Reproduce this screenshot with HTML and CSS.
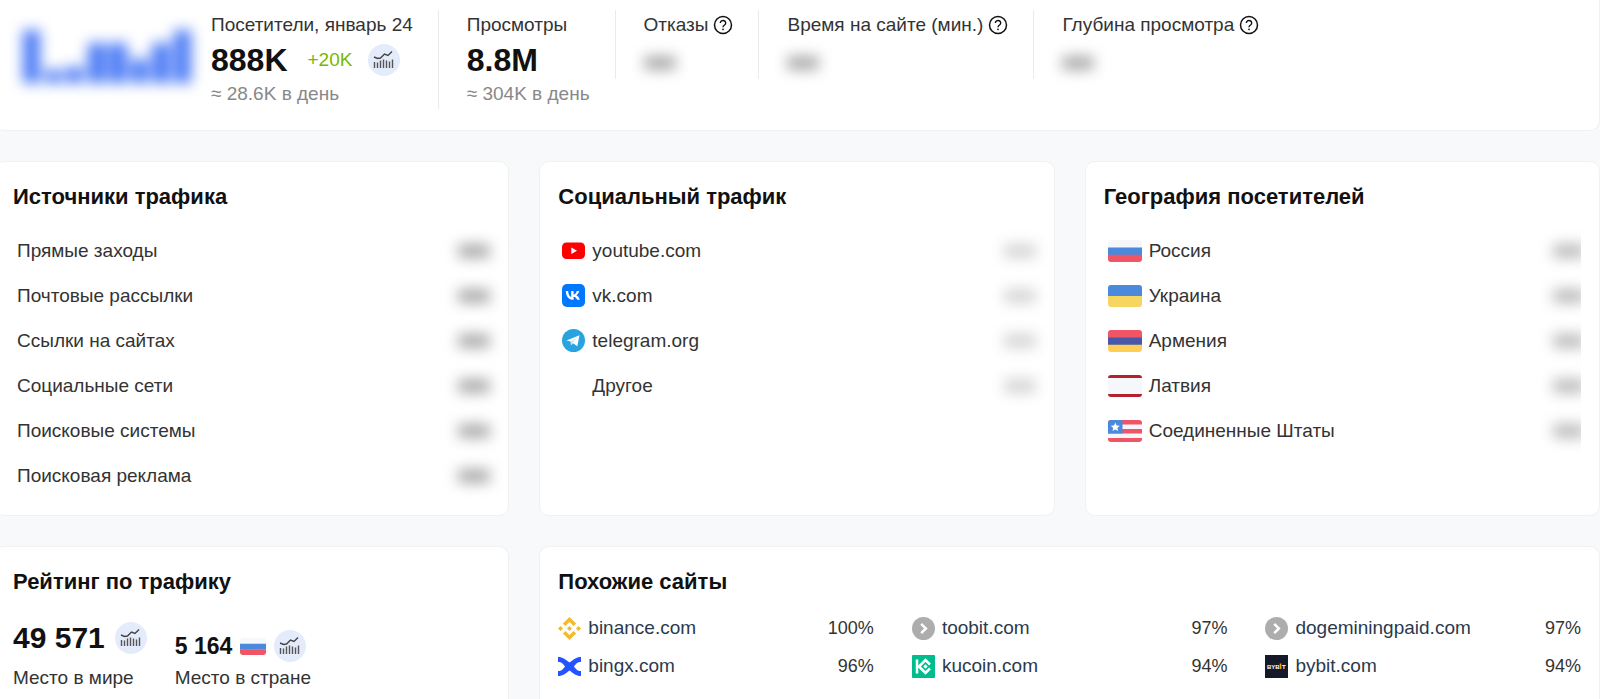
FILE: index.html
```html
<!DOCTYPE html>
<html lang="ru">
<head>
<meta charset="utf-8">
<title>Статистика сайта</title>
<meta name="viewport" content="width=device-width, initial-scale=1">
<link rel="stylesheet" href="styles.css">
</head>
<body>
<svg class="defs" aria-hidden="true">
  <symbol id="i-chart" viewBox="0 0 32 32">
    <path d="M6 13l3.500 1.500 3-.5 4-4 3.500 1.500 4-4" fill="none" stroke="#444" stroke-width="1.400"/>
    <path d="M6.500 18v6M9.500 18.500v5.500M12.500 16.500v7.500M15.500 15.500v8.500M18.500 16.500v7.500M21.500 17.500v6.500M24.500 15.500v8.500" fill="none" stroke="#555" stroke-width="1.400"/>
  </symbol>
  <symbol id="i-help" viewBox="0 0 20 20">
    <circle cx="10" cy="10" r="8.500" fill="none" stroke="#111" stroke-width="1.500"/>
    <path d="M7.300 8a2.700 2.500 0 1 1 4.300 2c-1 .7-1.600 1.100-1.600 2.200" fill="none" stroke="#111" stroke-width="1.400"/>
    <circle cx="10" cy="14.300" r=".9" fill="#111"/>
  </symbol>
  <symbol id="i-go" viewBox="0 0 23 23">
    <circle cx="11.500" cy="11.500" r="11.500" fill="#adadad"/>
    <path d="M9.200 6.800l4.700 4.700-4.700 4.700" fill="none" stroke="#fff" stroke-width="2.500"/>
  </symbol>
  <symbol id="f-ru" viewBox="0 0 34 22" preserveAspectRatio="none">
    <path fill="#f5f7fb" d="M0 0h34v8H0z"/><path fill="#4a89dc" d="M0 7.400h34V15H0z"/><path fill="#ef5565" d="M0 14.700h34V22H0z"/>
  </symbol>
</svg>

<main class="page">
  <section class="card summary">
    <svg class="bars" viewBox="0 0 180 60" aria-hidden="true">
      <path fill="#4a7af5" d="M5 4h17v53H5zM27 44h17v13H27zM48 41h17v16H48zM70 17h18v40H70zM91 17h18v40H91zM113 33h17v24h-17zM134 17h18v40h-18zM156 4h17v53h-17z"/>
    </svg>
    <div class="stat">
      <div class="label">Посетители, январь 24</div>
      <div class="line"><strong class="big">888K</strong><span class="growth">+20K</span><button class="chart-btn" type="button" aria-label="График посетителей"><svg><use href="#i-chart"/></svg></button></div>
      <div class="sub">≈ 28.6K в день</div>
    </div>
    <div class="stat ruled">
      <div class="label">Просмотры</div>
      <div class="line"><strong class="big">8.8M</strong></div>
      <div class="sub">≈ 304K в день</div>
    </div>
    <div class="stat ruled short">
      <div class="label">Отказы <svg class="help"><use href="#i-help"/></svg></div>
      <div class="line"><span class="smudge"></span></div>
    </div>
    <div class="stat ruled short">
      <div class="label">Время на сайте (мин.) <svg class="help"><use href="#i-help"/></svg></div>
      <div class="line"><span class="smudge"></span></div>
    </div>
    <div class="stat ruled short">
      <div class="label">Глубина просмотра <svg class="help"><use href="#i-help"/></svg></div>
      <div class="line"><span class="smudge"></span></div>
    </div>
  </section>

  <div class="grid">
    <section class="card">
      <h2>Источники трафика</h2>
      <ul class="rows">
        <li>Прямые заходы<span class="smudge"></span></li>
        <li>Почтовые рассылки<span class="smudge"></span></li>
        <li>Ссылки на сайтах<span class="smudge"></span></li>
        <li>Социальные сети<span class="smudge"></span></li>
        <li>Поисковые системы<span class="smudge"></span></li>
        <li>Поисковая реклама<span class="smudge"></span></li>
      </ul>
    </section>

    <section class="card">
      <h2>Социальный трафик</h2>
      <ul class="rows">
        <li><svg class="ico" viewBox="0 0 23 23"><rect y="3.500" width="23" height="16.500" rx="4.500" fill="#f00"/><path d="M9.300 8.500l5.700 3.300-5.700 3.300z" fill="#fff"/></svg>youtube.com<span class="smudge pale"></span></li>
        <li><svg class="ico" viewBox="0 0 23 23"><rect width="23" height="23" rx="5" fill="#07f"/><path d="M3.800 7H6.200c.2 4 1.800 5.600 3 6V7h2.400v3.700c1.300-.1 2.700-1.600 3.200-3.700h2.400c-.4 2-1.800 3.600-2.900 4.300 1.200.5 2.800 1.900 3.500 4.500h-2.600c-.6-1.700-1.900-3-3.600-3.100v3.100h-.4C6.800 15.800 4 12.600 3.800 7z" fill="#fff"/></svg>vk.com<span class="smudge pale"></span></li>
        <li><svg class="ico" viewBox="0 0 23 23"><circle cx="11.500" cy="11.500" r="11.500" fill="#29a3df"/><path d="M4.500 11.500L17.500 6.300l-2.200 11-4.300-3.100-2 2-.4-3.600z" fill="#fff"/><path d="M8.700 13l6.300-4.700-4.500 5.200-1.500 2.600z" fill="#b9dff2"/></svg>telegram.org<span class="smudge pale"></span></li>
        <li><span class="ico"></span>Другое<span class="smudge pale"></span></li>
      </ul>
    </section>

    <section class="card">
      <h2>География посетителей</h2>
      <ul class="rows">
        <li><svg class="flag"><use href="#f-ru"/></svg>Россия<span class="clip"><span class="smudge mid"></span></span></li>
        <li><svg class="flag" viewBox="0 0 34 22"><path fill="#4a89dc" d="M0 0h34v11H0z"/><path fill="#f6d660" d="M0 11h34v11H0z"/></svg>Украина<span class="clip"><span class="smudge mid"></span></span></li>
        <li><svg class="flag" viewBox="0 0 34 22"><path fill="#ef5565" d="M0 0h34v8H0z"/><path fill="#4758a9" d="M0 7.400h34V15H0z"/><path fill="#ffce54" d="M0 14.700h34V22H0z"/></svg>Армения<span class="clip"><span class="smudge mid"></span></span></li>
        <li><svg class="flag" viewBox="0 0 34 22"><path fill="#f5f7fb" d="M0 0h34v22H0z"/><path fill="#b51f2e" d="M0 0h34v3H0zM0 19h34v3H0z"/></svg>Латвия<span class="clip"><span class="smudge mid"></span></span></li>
        <li><svg class="flag" viewBox="0 0 34 22"><path fill="#f5f7fb" d="M0 0h34v22H0z"/><path fill="#ef5565" d="M0 0h34v4.500H0zM0 9h34v4.500H0zM0 18h34v4H0z"/><path fill="#4a89dc" d="M0 0h14.500v13.500H0z"/><path fill="#fff" d="M7.300 2.500l1.300 3 3.200.3-2.400 2.100.7 3.200-2.800-1.700-2.800 1.700.7-3.200-2.400-2.100 3.200-.3z"/></svg>Соединенные Штаты<span class="clip"><span class="smudge mid"></span></span></li>
      </ul>
    </section>
  </div>

  <div class="grid last">
    <section class="card cut">
      <h2>Рейтинг по трафику</h2>
      <div class="ranks">
        <div>
          <div class="rank world"><strong class="place">49 571</strong><button class="chart-btn" type="button" aria-label="График места в мире"><svg><use href="#i-chart"/></svg></button></div>
          <div class="caption">Место в мире</div>
        </div>
        <div>
          <div class="rank"><strong class="place small">5 164</strong><svg class="flag mini"><use href="#f-ru"/></svg><button class="chart-btn" type="button" aria-label="График места в стране"><svg><use href="#i-chart"/></svg></button></div>
          <div class="caption">Место в стране</div>
        </div>
      </div>
    </section>

    <section class="card cut wide">
      <h2>Похожие сайты</h2>
      <ul class="sites">
        <li><svg class="ico" viewBox="0 0 23 23"><g fill="#f3ba2f"><path d="M11.500 0l6.600 6.600-2.500 2.500-4.100-4.100-4.100 4.100-2.500-2.500zM11.500 23l6.600-6.600-2.500-2.500-4.100 4.100-4.100-4.100-2.500 2.500zM2.500 9L5 11.500 2.500 14 0 11.500zM20.500 9l2.500 2.500-2.500 2.500-2.500-2.500zM11.500 9l2.500 2.500-2.500 2.500L9 11.500z"/></g></svg><a href="#">binance.com</a><span class="pct">100%</span></li>
        <li><svg class="ico"><use href="#i-go"/></svg><a href="#">toobit.com</a><span class="pct">97%</span></li>
        <li><svg class="ico"><use href="#i-go"/></svg><a href="#">dogeminingpaid.com</a><span class="pct">97%</span></li>
        <li><svg class="ico" viewBox="0 0 23 23"><path d="M0 2c5 0 7.500 2.500 11.500 5.500C15.500 4.500 18 2 23 2v5c-4 0-5 2-7 4.500 2 2.500 3 4.500 7 4.500v5c-5 0-7.500-2.500-11.500-5.500C7.500 18.500 5 21 0 21v-5c4 0 5-2 7-4.500C5 9 4 7 0 7z" fill="#2354ff"/></svg><a href="#">bingx.com</a><span class="pct">96%</span></li>
        <li><svg class="ico" viewBox="0 0 23 23"><rect width="23" height="23" rx="1" fill="#01bc8d"/><path d="M5 4.500v14M5.500 11.500h2M7 11.500l6.500-6.500 4.500 4.500M7 11.500l6.500 6.500 4.500-4.500" fill="none" stroke="#fff" stroke-width="2.500"/><path d="M13.500 9.300l2.200 2.200-2.200 2.200-2.200-2.200z" fill="#fff"/></svg><a href="#">kucoin.com</a><span class="pct">94%</span></li>
        <li><svg class="ico" viewBox="0 0 23 23"><path fill="#15192a" d="M0 0h23v23H0z"/><text x="2" y="14" class="mark">BYB</text><path d="M14.700 8.500h1.600v5.500h-1.600z" fill="#f7a600"/><text x="17" y="14" class="mark">T</text></svg><a href="#">bybit.com</a><span class="pct">94%</span></li>
      </ul>
    </section>
  </div>
</main>
</body>
</html>
```
FILE: styles.css
```css
* { box-sizing: border-box; }

body {
  margin: 0;
  background: #f8f9fb;
  color: #333;
  font: 19px/24px "Liberation Sans", Arial, sans-serif;
  overflow-x: hidden;
}

.defs { position: absolute; width: 0; height: 0; }

svg { display: block; flex: none; }

ul { list-style: none; margin: 0; padding: 0; }

.page {
  display: flex;
  flex-direction: column;
  gap: 30px;
  min-height: 100vh;
  margin: 0 0 0 -6px;
}

.card {
  background: #fff;
  border: 1px solid #eff1f3;
  border-radius: 10px;
  padding: 22px 18px 17px;
}

h2 {
  margin: 0;
  color: #111;
  font-size: 22px;
  line-height: 26px;
}

/* Summary strip */
.summary {
  display: flex;
  align-items: flex-start;
  border-top: 0;
  border-radius: 0 0 10px 10px;
  padding: 10px 18px 21px;
}

.bars {
  width: 180px;
  height: 60px;
  margin: 16px 13px 0 5px;
  filter: blur(7px);
}

.stat { padding: 3px 25px 3px 0; }
.ruled { border-left: 1px solid #ebebeb; padding-left: 28px; }
.short { padding-bottom: 0; }

.label { display: flex; align-items: center; gap: 5px; white-space: nowrap; }
.help { width: 20px; height: 20px; }
.line { display: flex; align-items: center; height: 45px; }
.short .line { height: 42px; padding-top: 10px; }
.big { color: #111; font-size: 32px; line-height: 36px; }
.growth { margin: 0 16px 0 20px; color: #76b900; }
.sub { color: #888; white-space: nowrap; }

.chart-btn {
  width: 32px;
  height: 32px;
  padding: 0;
  border: 0;
  border-radius: 50%;
  background: #e4ebfb;
  cursor: pointer;
}
.chart-btn svg { width: 32px; height: 32px; }

.smudge {
  width: 32px;
  height: 14px;
  margin-left: auto;
  border-radius: 4px;
  background: #aaa;
  filter: blur(7px);
}
.pale { background: #d4d4d4; }
.mid { background: #bbb; }
.line .smudge { margin-left: 0; }

/* Cards */
.grid {
  display: grid;
  grid-template-columns: repeat(3, 1fr);
  gap: 30px;
}
.last { flex: 1; }
.wide { grid-column: span 2; }
.cut { border-bottom: 0; border-radius: 10px 10px 0 0; padding-bottom: 0; }

.rows { padding: 18px 0 0 4px; }
.rows li { display: flex; align-items: center; height: 45px; }
.ico { flex: none; width: 23px; height: 23px; margin-right: 7px; }
.flag { width: 34px; height: 22px; margin-right: 7px; border-radius: 3px; }

.clip { margin-left: auto; padding: 15px 0 15px 16px; overflow: hidden; }
.clip .smudge { display: block; margin-right: -4px; }

/* Traffic rank */
.ranks { display: flex; align-items: flex-end; gap: 28px; padding-top: 27px; }
.rank { display: flex; align-items: center; }
.world { padding-bottom: 8px; }
.place { margin-right: 10px; color: #111; font-size: 30px; line-height: 32px; }
.small { margin-right: 8px; font-size: 23px; }
.mini { width: 26px; height: 17px; margin-right: 8px; }
.caption { padding-top: 4px; }

/* Similar sites */
.sites {
  display: grid;
  grid-template-columns: repeat(3, 1fr);
  column-gap: 38px;
  padding-top: 14px;
}
.sites li { display: flex; align-items: center; height: 38px; }
.sites a { color: #2b3a4e; text-decoration: none; }
.pct { margin-left: auto; font-size: 18px; }
.mark { fill: #fff; font: bold 6px "Liberation Sans", sans-serif; }
```
